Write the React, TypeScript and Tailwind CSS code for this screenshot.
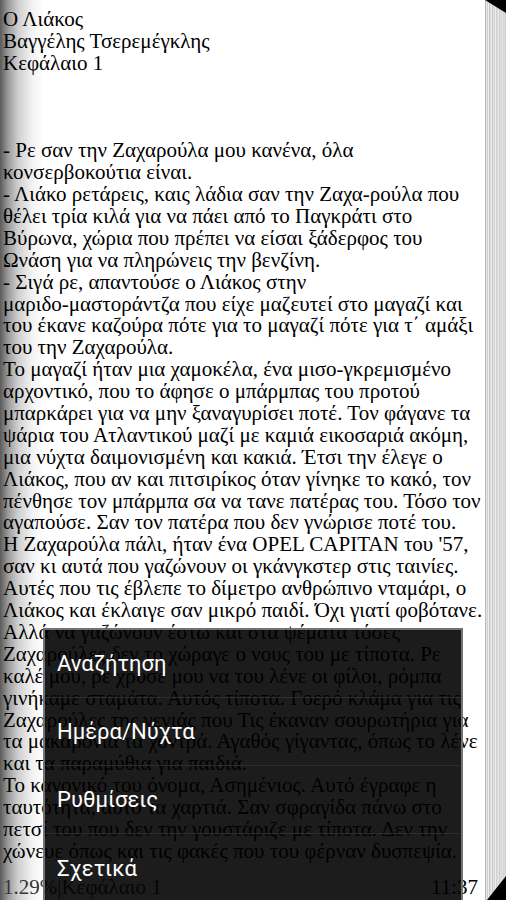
import React from 'react';

const LINES = [
  'Ο Λιάκος',
  'Βαγγέλης Τσερεμέγκλης',
  'Κεφάλαιο 1',
  '',
  '',
  '',
  '- Ρε σαν την Ζαχαρούλα μου κανένα, όλα',
  'κονσερβοκούτια είναι.',
  '- Λιάκο ρετάρεις, καις λάδια σαν την Ζαχα-ρούλα που',
  'θέλει τρία κιλά για να πάει από το Παγκράτι στο',
  'Βύρωνα, χώρια που πρέπει να είσαι ξάδερφος του',
  'Ωνάση για να πληρώνεις την βενζίνη.',
  '- Σιγά ρε, απαντούσε ο Λιάκος στην',
  'μαριδο-μαστοράντζα που είχε μαζευτεί στο μαγαζί και',
  'του έκανε καζούρα πότε για το μαγαζί πότε για τ΄ αμάξι',
  'του την Ζαχαρούλα.',
  'Το μαγαζί ήταν μια χαμοκέλα, ένα μισο-γκρεμισμένο',
  'αρχοντικό, που το άφησε ο μπάρμπας του προτού',
  'μπαρκάρει για να μην ξαναγυρίσει ποτέ. Τον φάγανε τα',
  'ψάρια του Ατλαντικού μαζί με καμιά εικοσαριά ακόμη,',
  'μια νύχτα δαιμονισμένη και κακιά. Έτσι την έλεγε ο',
  'Λιάκος, που αν και πιτσιρίκος όταν γίνηκε το κακό, τον',
  'πένθησε τον μπάρμπα σα να τανε πατέρας του. Τόσο τον',
  'αγαπούσε. Σαν τον πατέρα που δεν γνώρισε ποτέ του.',
  "Η Ζαχαρούλα πάλι, ήταν ένα OPEL CAPITAN του '57,",
  'σαν κι αυτά που γαζώνουν οι γκάνγκστερ στις ταινίες.',
  'Αυτές που τις έβλεπε το δίμετρο ανθρώπινο νταμάρι, ο',
  'Λιάκος και έκλαιγε σαν μικρό παιδί. Όχι γιατί φοβότανε.',
  'Αλλά να γαζώνουν έστω και στα ψέματα τόσες',
  'Ζαχαρούλες δεν το χώραγε ο νους του με τίποτα. Ρε',
  'καλέ μου, ρε χρυσέ μου να του λένε οι φίλοι, ρόμπα',
  'γινήκαμε σταμάτα. Αυτός τίποτα. Γοερό κλάμα για τις',
  'Ζαχαρούλες της γενιάς που Τις έκαναν σουρωτήρια για',
  'τα μακαρόνια τα χοντρά. Αγαθός γίγαντας, όπως το λένε',
  'και τα παραμύθια για παιδιά.',
  'Το κανονικό του όνομα, Ασημένιος. Αυτό έγραφε η',
  'ταυτότητα, αυτό τα χαρτιά. Σαν σφραγίδα πάνω στο',
  'πετσί του που δεν την γουστάριζε με τίποτα. Δεν την',
  'χώνευε όπως και τις φακές που του φέρναν δυσπεψία.',
];

const MENU = ['Αναζήτηση', 'Ημέρα/Νύχτα', 'Ρυθμίσεις', 'Σχετικά'];

// page edge stripes, 1px each
const EDGE = [
  '#b8b8b8', '#e6e6e6', '#d0d0d0', '#eeeeee', '#c8c8c8', '#dedede', '#e8e8e8',
  '#cccccc', '#e2e2e2', '#d6d6d6', '#ececec', '#d2d2d2', '#dcdcdc', '#e6e6e6',
  '#cfcfcf', '#e0e0e0', '#d8d8d8', '#e4e4e4', '#d4d4d4', '#dadada', '#d0d0d0',
];

function PageEdge() {
  return (
    <svg width="21" height="900" viewBox="0 0 21 900" className="block">
      {EDGE.map((c, i) => (
        <rect key={i} x={i} y={0} width={1} height={900} fill={c} />
      ))}
      <polygon points="0,0 21,0 21,13" fill="#000" />
      <polygon points="2,900 21,876 21,900" fill="#000" />
    </svg>
  );
}

export default function App() {
  return (
    <div className="relative flex h-[900px] w-[506px] overflow-hidden bg-white">
      <div className="flex flex-1 flex-col bg-[linear-gradient(to_right,#5a5a5a_0px,#9a9a9a_8px,#cfcfcf_18px,#f2f2f2_32px,#ffffff_44px)] pl-[3px] pt-[9px] pb-[1px] font-['Liberation_Serif',serif] text-[21px] leading-[21.9px] text-black">
        {LINES.map((line, i) => (
          <div key={i} className="h-[21.9px] whitespace-nowrap">
            {line}
          </div>
        ))}
        <div className="mt-auto flex justify-between whitespace-nowrap pr-[7px] text-[#333]">
          <span>1.29%|Κεφάλαιο 1</span>
          <span className="text-black">11:37</span>
        </div>
      </div>
      <PageEdge />

      <div className="absolute bottom-0 left-[43px] top-[628px] w-[420px] border-x-2 border-t-2 border-[#8a8a8a]/80 bg-black/[0.89]">
        {MENU.map((item, i) => (
          <div
            key={item}
            className={`flex h-[68px] items-center pl-[12px] font-['Roboto',sans-serif] text-[22px] text-white ${
              i < MENU.length - 1 ? 'border-b border-[#2c2c2c]' : ''
            }`}
          >
            {item}
          </div>
        ))}
      </div>
    </div>
  );
}
